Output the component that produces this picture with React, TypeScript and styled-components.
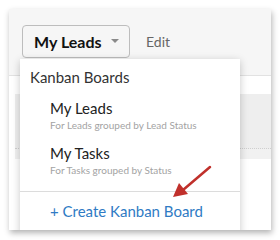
import styled, { createGlobalStyle } from "styled-components";

const GlobalStyle = createGlobalStyle`
  html, body {
    margin: 0;
    padding: 0;
    background: #ffffff;
    font-family: Lato, "Open Sans", sans-serif;
  }
`;

const Page = styled.div`
  width: 280px;
  height: 240px;
  padding: 9px;
  box-sizing: border-box;
`;

const Frame = styled.div`
  position: relative;
  width: 262px;
  height: 221px;
  overflow: hidden;
  background: #ffffff;
  box-shadow: 1px 3px 6px rgba(0, 0, 0, 0.3);
`;

const Toolbar = styled.div`
  display: flex;
  align-items: center;
  gap: 16px;
  height: 67px;
  padding: 0 0 2px 13px;
  box-sizing: border-box;
  background: #f6f6f6;
  border-bottom: 1px solid #e2e2e2;
`;

const ViewButton = styled.div`
  display: flex;
  align-items: center;
  justify-content: space-between;
  width: 108px;
  height: 33px;
  padding: 0 10px 0 11px;
  box-sizing: border-box;
  border: 1px solid #bdbdbd;
  border-radius: 4px;
  font-size: 16px;
  font-weight: 700;
  color: #111;
`;

const Caret = styled.span`
  width: 0;
  height: 0;
  border-left: 4px solid transparent;
  border-right: 4px solid transparent;
  border-top: 4px solid #8a8a8a;
`;

const EditLink = styled.span`
  font-size: 14px;
  color: #666;
`;

const Body = styled.div`
  padding-top: 18px;
`;

const Panel = styled.div`
  margin-left: 6px;
  height: 65px;
  background: #eeeeee;
  position: relative;
  border-bottom: 10px solid #f1f1f1;
  box-sizing: border-box;
  &::after {
    content: "";
    position: absolute;
    left: 0;
    right: 0;
    bottom: 0;
    border-bottom: 1px dotted #cfcfcf;
  }
`;

const Menu = styled.div`
  position: absolute;
  left: 11px;
  top: 50px;
  width: 220px;
  height: 190px;
  background: #fff;
  box-shadow: 0 2px 8px rgba(0, 0, 0, 0.22);
`;

const MenuHeader = styled.div`
  padding: 8px 10px 0;
  font-size: 15px;
  line-height: 20px;
  color: #333;
`;

const MenuItem = styled.div<{ $first?: boolean }>`
  padding: 0 30px;
  margin-top: 11px;
`;

const ItemTitle = styled.div`
  font-size: 15px;
  line-height: 20px;
  color: #222;
`;

const ItemHint = styled.div`
  margin-top: 1px;
  font-size: 10px;
  line-height: 13px;
  color: #a3a3a3;
`;

const Divider = styled.div`
  margin-top: 14px;
  border-top: 1px solid #dcdcdc;
`;

const CreateLink = styled.div`
  padding: 9px 30px 0;
  font-size: 15px;
  line-height: 20px;
  white-space: nowrap;
  color: #2f7bc4;
`;

const Arrow = styled.svg`
  position: absolute;
  left: 160px;
  top: 155px;
`;

export default function App() {
  return (
    <Page>
      <GlobalStyle />
      <Frame>
        <Toolbar>
          <ViewButton>
            My Leads
            <Caret />
          </ViewButton>
          <EditLink>Edit</EditLink>
        </Toolbar>
        <Body>
          <Panel />
        </Body>
        <Menu>
          <MenuHeader>Kanban Boards</MenuHeader>
          <MenuItem $first>
            <ItemTitle>My Leads</ItemTitle>
            <ItemHint>For Leads grouped by Lead Status</ItemHint>
          </MenuItem>
          <MenuItem>
            <ItemTitle>My Tasks</ItemTitle>
            <ItemHint>For Tasks grouped by Status</ItemHint>
          </MenuItem>
          <Divider />
          <CreateLink>+ Create Kanban Board</CreateLink>
        </Menu>
        <Arrow width="46" height="40" viewBox="0 0 46 40">
          <line x1="41" y1="3" x2="14" y2="26" stroke="#c0302b" strokeWidth="2.5" strokeLinecap="round" />
          <polygon points="4,33 10,19 19,30" fill="#c0302b" />
        </Arrow>
      </Frame>
    </Page>
  );
}
